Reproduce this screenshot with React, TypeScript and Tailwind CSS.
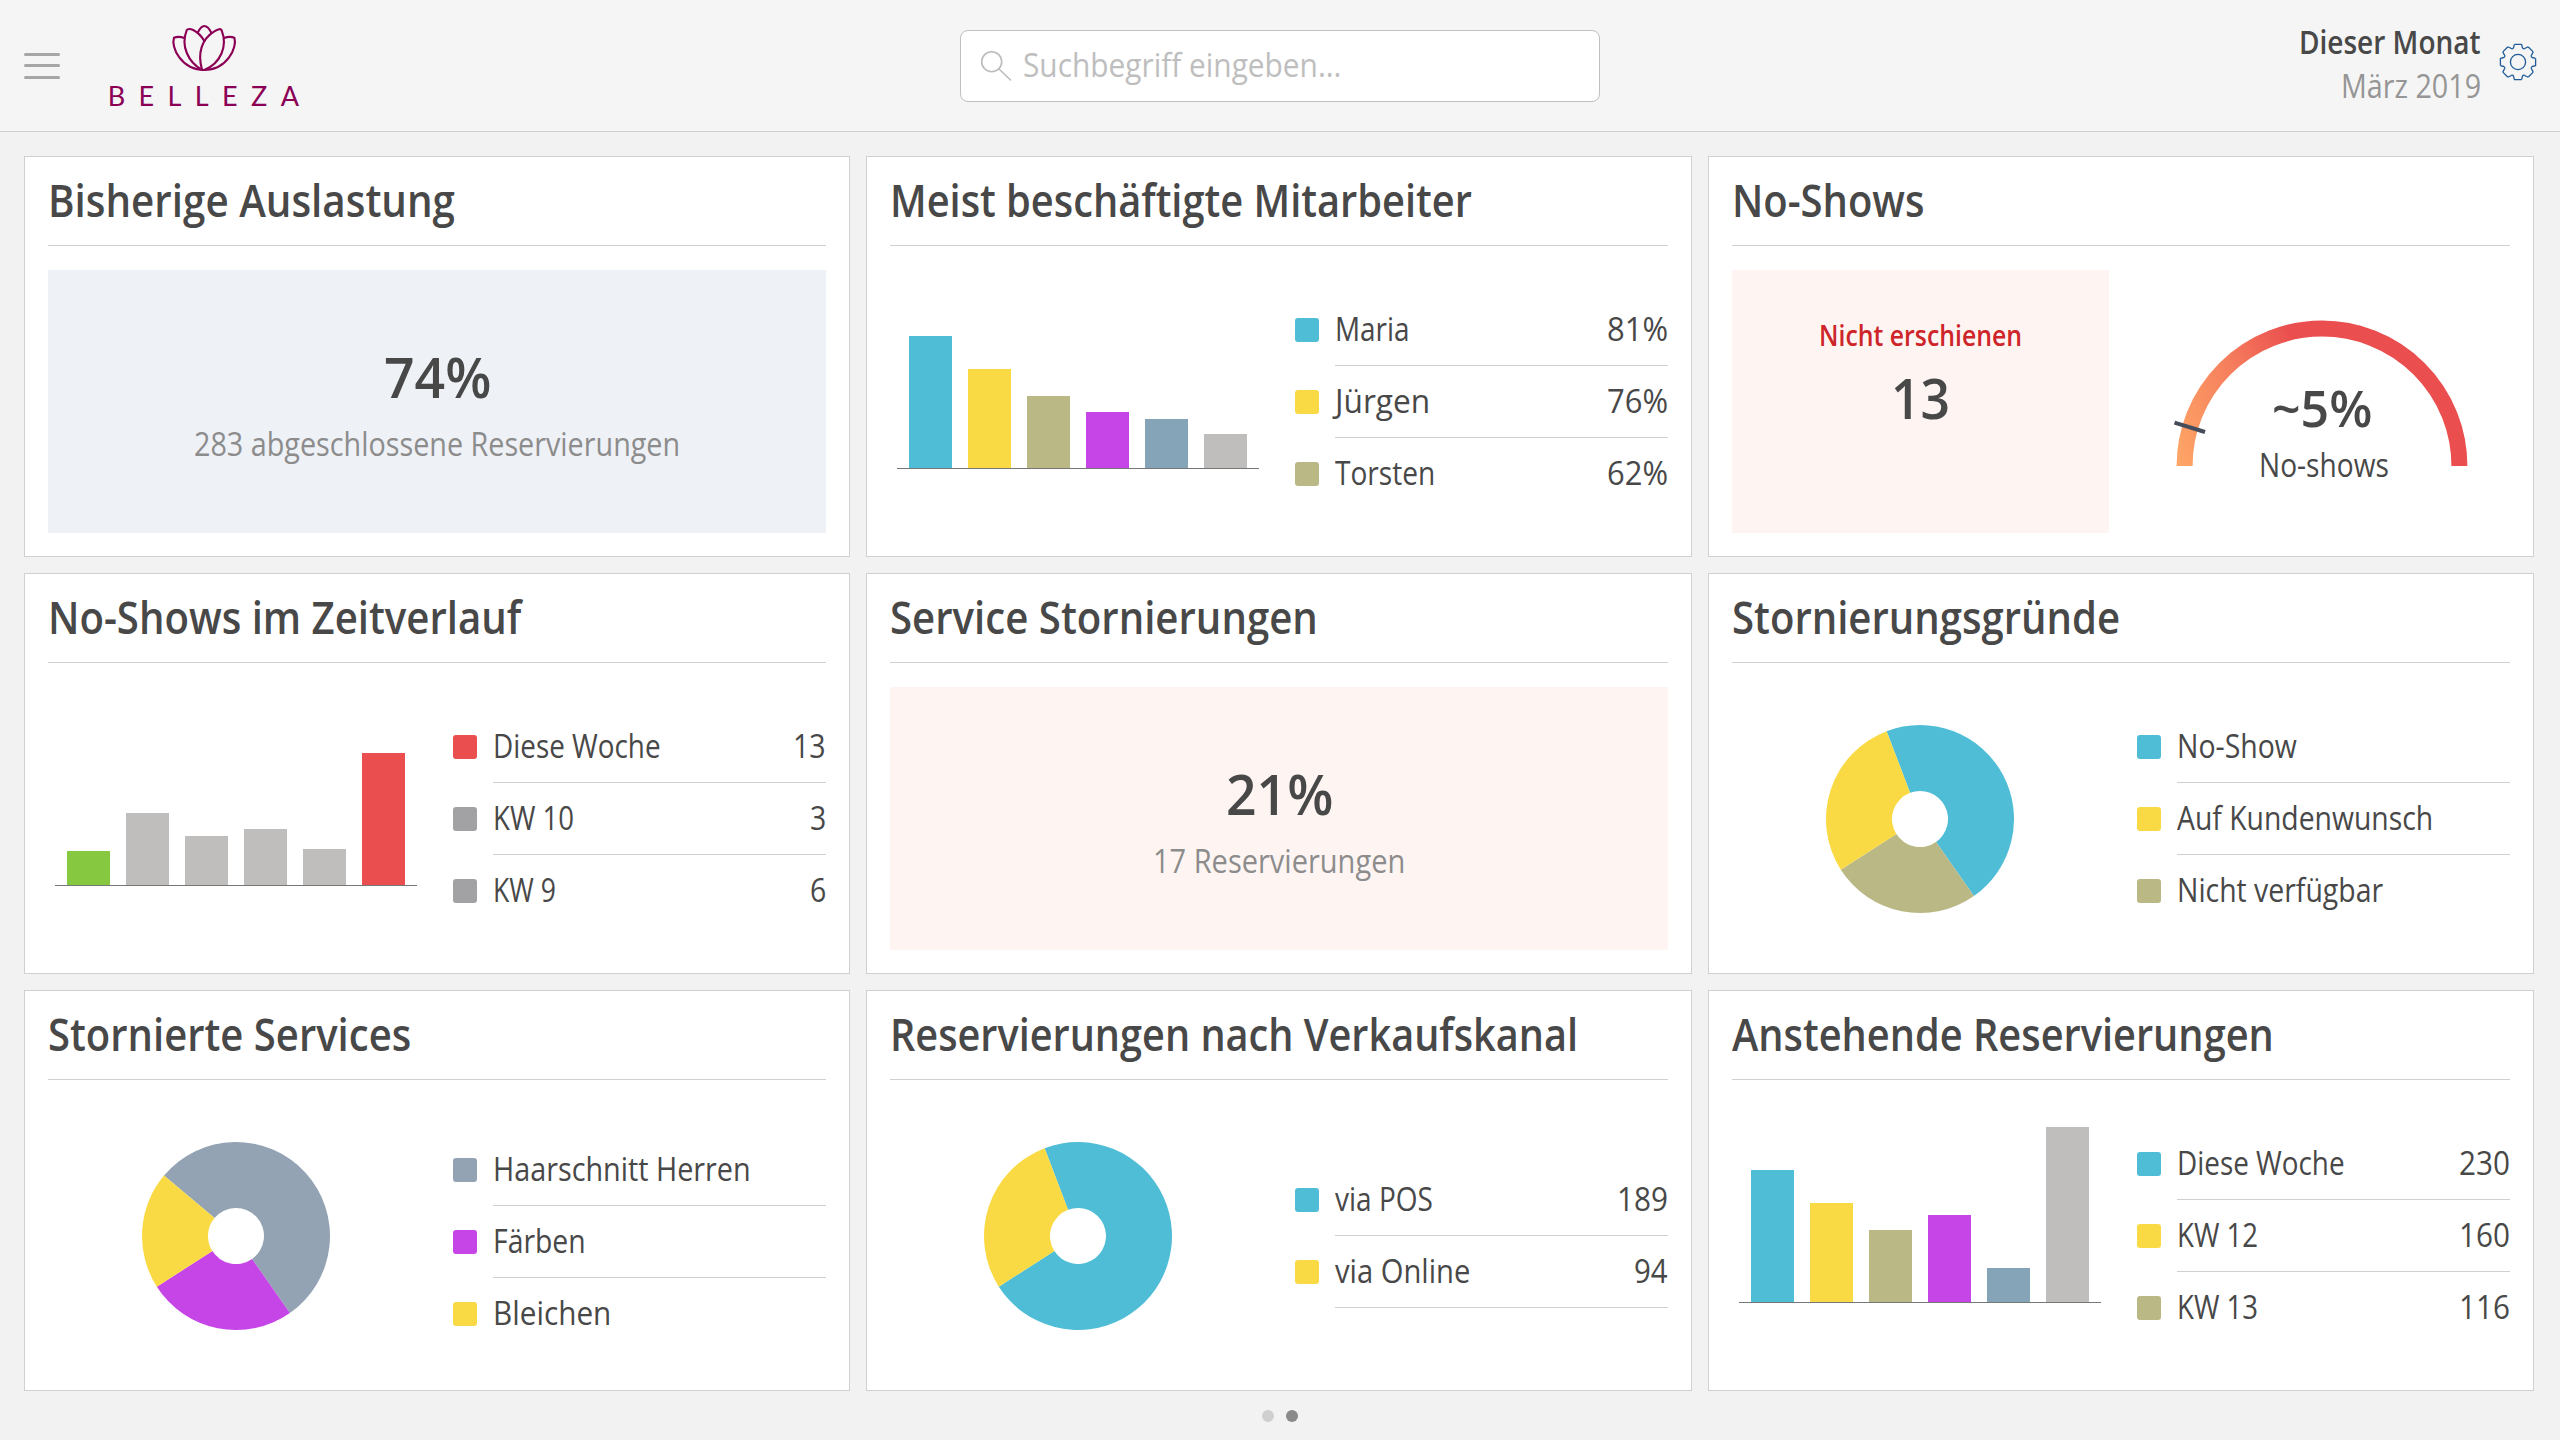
import { useLayoutEffect, useRef, useState } from 'react';
import type { ReactNode } from 'react';

const TEAL = '#50bdd6';
const YELLOW = '#f9da45';
const OLIVE = '#bab884';
const PURPLE = '#c645e6';
const STEEL = '#86a4b8';
const SILVER = '#bfbebd';
const RED = '#ea4e4e';
const GREEN = '#86c840';
const GRAY = '#a2a1a3';
const SLATE = '#94a3b4';

type LegendItem = { color: string; label: string; width: string; value?: string; valueWidth?: string };
type BarDatum = { color: string; height: number };
type SliceDatum = { color: string; from: number; to: number };

/** A single line of text, condensed horizontally to fill the width its class gives it. */
function Condensed({ className, children }: { className: string; children: ReactNode }) {
  const box = useRef<HTMLSpanElement>(null);
  const line = useRef<HTMLSpanElement>(null);
  const [scale, setScale] = useState(1);

  useLayoutEffect(() => {
    if (box.current && line.current) {
      setScale(box.current.clientWidth / line.current.offsetWidth);
    }
  }, [children]);

  return (
    <span ref={box} className={`block text-left whitespace-nowrap ${className}`}>
      <span ref={line} className="inline-block origin-left" style={{ transform: `scaleX(${scale})` }}>
        {children}
      </span>
    </span>
  );
}

function Card({ title, width, children }: { title: string; width: string; children: ReactNode }) {
  return (
    <section className="flex h-[401px] flex-col border border-[#d0d0d0] bg-white px-[23px]">
      <h2 className="flex h-[89px] items-center border-b border-[#d0d0d0] pb-1 text-[46px] leading-none font-semibold">
        <Condensed className={width}>{title}</Condensed>
      </h2>
      <div className="mt-6 grid h-[263px] auto-cols-fr grid-flow-col gap-6">{children}</div>
    </section>
  );
}

function Panel({ className, value, caption, width }: { className: string; value: string; caption: string; width: string }) {
  return (
    <div className={`flex flex-col items-center pt-[70px] ${className}`}>
      <strong className="text-[56px] leading-[72px] font-semibold">
        <Condensed className="w-[107px]">{value}</Condensed>
      </strong>
      <span className="mt-3 text-[32px] leading-[40px] text-[#8c8c8c]">
        <Condensed className={width}>{caption}</Condensed>
      </span>
    </div>
  );
}

function Legend({ items, shifted, closed }: { items: LegendItem[]; shifted?: boolean; closed?: boolean }) {
  return (
    <ul className={`flex flex-col justify-center pl-1 text-[32px] ${shifted ? 'pt-3' : ''}`}>
      {items.map((item, i) => (
        <li key={item.label} className="flex h-[72px] items-center gap-4">
          <span className="size-6 rounded-[3px]" style={{ backgroundColor: item.color }} />
          <span
            className={`flex h-full flex-1 items-center justify-between border-b leading-none ${
              i < items.length - 1 || closed ? 'border-[#d0d0d0]' : 'border-transparent'
            }`}
          >
            <Condensed className={item.width}>{item.label}</Condensed>
            {item.value && <Condensed className={item.valueWidth ?? 'w-[51px]'}>{item.value}</Condensed>}
          </span>
        </li>
      ))}
    </ul>
  );
}

function BarChart({ bars }: { bars: BarDatum[] }) {
  return (
    <div className="flex items-end pb-16 pl-[7px]">
      <div className="flex items-end gap-4 border-b border-[#777777] px-3">
        {bars.map((bar, i) => (
          <div key={i} className="w-[43px]" style={{ height: bar.height, backgroundColor: bar.color }} />
        ))}
      </div>
    </div>
  );
}

function point(angle: number, radius: number) {
  const rad = (angle * Math.PI) / 180;
  return `${(Math.sin(rad) * radius).toFixed(2)} ${(-Math.cos(rad) * radius).toFixed(2)}`;
}

function Donut({ slices }: { slices: SliceDatum[] }) {
  return (
    <div className="flex items-center pl-[94px]">
      <svg className="size-[188px]" viewBox="-94 -94 188 188">
        {slices.map(({ color, from, to }) => {
          const large = to - from > 180 ? 1 : 0;
          return (
            <path
              key={color}
              fill={color}
              d={`M${point(from, 94)} A94 94 0 ${large} 1 ${point(to, 94)} L${point(to, 28)} A28 28 0 ${large} 0 ${point(from, 28)} Z`}
            />
          );
        })}
      </svg>
    </div>
  );
}

function Gauge() {
  return (
    <div className="relative flex flex-col items-center pt-[50px]">
      <svg className="h-[150px] w-[298px]" viewBox="-149 -146 298 150">
        <defs>
          <linearGradient id="gauge" gradientUnits="userSpaceOnUse" x1="-146" y1="0" x2="0" y2="-60">
            <stop offset="0" stopColor="#ffa766" />
            <stop offset="0.55" stopColor="#f67f5e" />
            <stop offset="1" stopColor="#ea4e4e" />
          </linearGradient>
        </defs>
        <path d="M-137.4 0 A137.4 137.4 0 0 1 137.4 0" fill="none" stroke="url(#gauge)" strokeWidth="16" />
        <path d="M-147.5 -43.3 L-117 -34" stroke="#454d5b" strokeWidth="4" />
      </svg>
      <div className="absolute top-[107px] flex flex-col items-center">
        <strong className="text-[51px] leading-[60px] font-semibold">
          <Condensed className="w-[100px]">~5%</Condensed>
        </strong>
        <span className="mt-2 pl-1 text-[32px] leading-[40px]">
          <Condensed className="w-[130px]">No-shows</Condensed>
        </span>
      </div>
    </div>
  );
}

function Logo() {
  return (
    <div className="ml-[47px] flex w-[194px] flex-col items-center text-[#8b0055]">
      <svg
        className="h-[50px] w-[68px]"
        viewBox="509 70 204 150"
        fill="none"
        stroke="currentColor"
        strokeWidth="6.4"
        strokeLinejoin="round"
        strokeLinecap="round"
      >
        <path d="M552 115 C541 111 529 111 521 114 C511 143 543 211 612 211" />
        <path d="M671 115 C682 111 694 111 702 114 C712 143 680 211 612 211" />
        <path d="M604 210 C565 188 540 140 559 92 C564 82 592 91 612 124" />
        <path d="M605 210 C591 160 604 118 642 95 C653 88 661 86 664 92 C683 140 660 192 612 211" />
        <path d="M592 99 C598 87 606 79 612 79 C618 79 627 87 633 99" />
      </svg>
      <span className="mt-[6px] -mr-[12px] font-[Lato,sans-serif] text-[27px] leading-[34px] tracking-[13.4px]">BELLEZA</span>
    </div>
  );
}

function Gear() {
  return (
    <svg className="size-[38px]" viewBox="-19 -19 38 38" fill="none" stroke="#1f5b99" strokeWidth="1.3" strokeLinejoin="round">
      <circle r="7.6" />
      {[0, 90, 180, 270].map((angle) => (
        <path
          key={angle}
          transform={`rotate(${angle})`}
          d="M-3.6 -17.6 H3.6 L4.5 -14.2 Q4.9 -13 6.2 -13.2 L9.6 -15 L10.6 -14.7 L14.7 -10.6 L15 -9.6 L13.2 -6.2 Q13 -4.9 14.2 -4.5 L17.6 -3.6"
        />
      ))}
    </svg>
  );
}

function Header() {
  return (
    <header className="flex h-[132px] items-start justify-between border-b border-[#cfcfcf] bg-[#f5f5f5] pr-[23px] pl-6">
      <div className="flex w-[936px] items-start">
        <div className="mt-[53px] flex w-9 flex-col gap-[8.3px]">
          <span className="h-[3px] rounded-full bg-[#a6a6a6]" />
          <span className="h-[3px] rounded-full bg-[#a6a6a6]" />
          <span className="h-[3px] rounded-full bg-[#a6a6a6]" />
        </div>
        <div className="pt-[23px]">
          <Logo />
        </div>
      </div>
      <div className="mt-[30px] flex h-[72px] w-[640px] items-center rounded-lg border border-[#c0c0c0] bg-white pl-[18px]">
        <svg className="size-[34px]" viewBox="0 0 34 34" fill="none" stroke="#bcbcbc" strokeWidth="1.6" strokeLinecap="round">
          <circle cx="12.7" cy="12.7" r="10" />
          <path d="M20 20 L31.5 31" />
        </svg>
        <span className="ml-[10px] pb-0.5 text-[32px] leading-none text-[#bebebe]">
          <Condensed className="w-[318px]">Suchbegriff eingeben...</Condensed>
        </span>
      </div>
      <div className="flex w-[937px] items-start justify-end gap-[18px]">
        <div className="mt-5 flex flex-col items-end text-[32px] leading-[44px]">
          <span className="font-semibold">
            <Condensed className="w-[182px]">Dieser Monat</Condensed>
          </span>
          <span className="text-[#969696]">
            <Condensed className="w-[140px]">März 2019</Condensed>
          </span>
        </div>
        <div className="mt-[43px]">
          <Gear />
        </div>
      </div>
    </header>
  );
}

export default function App() {
  return (
    <div className="flex h-[1440px] w-[2560px] flex-col overflow-hidden bg-[#f2f2f2] font-['Open_Sans',sans-serif] text-[#484848]">
      <Header />
      <main className="mt-6 ml-6 grid grid-cols-[repeat(3,826px)] gap-4">
        <Card title="Bisherige Auslastung" width="w-[407px]">
          <Panel className="bg-[#eef1f6]" value="74%" caption="283 abgeschlossene Reservierungen" width="w-[486px]" />
        </Card>

        <Card title="Meist beschäftigte Mitarbeiter" width="w-[582px]">
          <BarChart
            bars={[
              { color: TEAL, height: 132 },
              { color: YELLOW, height: 99 },
              { color: OLIVE, height: 72 },
              { color: PURPLE, height: 56 },
              { color: STEEL, height: 49 },
              { color: SILVER, height: 34 },
            ]}
          />
          <Legend
            items={[
              { color: TEAL, label: 'Maria', width: 'w-[75px]', value: '81%', valueWidth: 'w-[61px]' },
              { color: YELLOW, label: 'Jürgen', width: 'w-[95px]', value: '76%', valueWidth: 'w-[61px]' },
              { color: OLIVE, label: 'Torsten', width: 'w-[100px]', value: '62%', valueWidth: 'w-[61px]' },
            ]}
          />
        </Card>

        <Card title="No-Shows" width="w-[192px]">
          <div className="flex flex-col items-center bg-[#fef5f3] pt-[45px]">
            <span className="text-[29px] leading-[40px] font-semibold text-[#cd2529]">
              <Condensed className="w-[203px]">Nicht erschienen</Condensed>
            </span>
            <strong className="mt-2 text-[56px] leading-[68px] font-semibold">
              <Condensed className="w-[59px]">13</Condensed>
            </strong>
          </div>
          <Gauge />
        </Card>

        <Card title="No-Shows im Zeitverlauf" width="w-[473px]">
          <BarChart
            bars={[
              { color: GREEN, height: 34 },
              { color: SILVER, height: 72 },
              { color: SILVER, height: 49 },
              { color: SILVER, height: 56 },
              { color: SILVER, height: 36 },
              { color: RED, height: 132 },
            ]}
          />
          <Legend
            items={[
              { color: RED, label: 'Diese Woche', width: 'w-[168px]', value: '13', valueWidth: 'w-[33px]' },
              { color: GRAY, label: 'KW 10', width: 'w-[81px]', value: '3', valueWidth: 'w-4' },
              { color: GRAY, label: 'KW 9', width: 'w-[63px]', value: '6', valueWidth: 'w-4' },
            ]}
          />
        </Card>

        <Card title="Service Stornierungen" width="w-[428px]">
          <Panel className="bg-[#fef5f3]" value="21%" caption="17 Reservierungen" width="w-[252px]" />
        </Card>

        <Card title="Stornierungsgründe" width="w-[388px]">
          <Donut
            slices={[
              { color: TEAL, from: -20.8, to: 145 },
              { color: OLIVE, from: 145, to: 237.4 },
              { color: YELLOW, from: 237.4, to: 339.2 },
            ]}
          />
          <Legend
            items={[
              { color: TEAL, label: 'No-Show', width: 'w-[120px]' },
              { color: YELLOW, label: 'Auf Kundenwunsch', width: 'w-[256px]' },
              { color: OLIVE, label: 'Nicht verfügbar', width: 'w-[206px]' },
            ]}
          />
        </Card>

        <Card title="Stornierte Services" width="w-[363px]">
          <Donut
            slices={[
              { color: SLATE, from: -50, to: 145 },
              { color: PURPLE, from: 145, to: 237.4 },
              { color: YELLOW, from: 237.4, to: 310 },
            ]}
          />
          <Legend
            shifted
            items={[
              { color: SLATE, label: 'Haarschnitt Herren', width: 'w-[258px]' },
              { color: PURPLE, label: 'Färben', width: 'w-[93px]' },
              { color: YELLOW, label: 'Bleichen', width: 'w-[118px]' },
            ]}
          />
        </Card>

        <Card title="Reservierungen nach Verkaufskanal" width="w-[688px]">
          <Donut
            slices={[
              { color: TEAL, from: -20.8, to: 237.4 },
              { color: YELLOW, from: 237.4, to: 339.2 },
            ]}
          />
          <Legend
            closed
            items={[
              { color: TEAL, label: 'via POS', width: 'w-[98px]', value: '189' },
              { color: YELLOW, label: 'via Online', width: 'w-[135px]', value: '94', valueWidth: 'w-[34px]' },
            ]}
          />
        </Card>

        <Card title="Anstehende Reservierungen" width="w-[542px]">
          <BarChart
            bars={[
              { color: TEAL, height: 132 },
              { color: YELLOW, height: 99 },
              { color: OLIVE, height: 72 },
              { color: PURPLE, height: 87 },
              { color: STEEL, height: 34 },
              { color: SILVER, height: 175 },
            ]}
          />
          <Legend
            items={[
              { color: TEAL, label: 'Diese Woche', width: 'w-[168px]', value: '230' },
              { color: YELLOW, label: 'KW 12', width: 'w-[81px]', value: '160' },
              { color: OLIVE, label: 'KW 13', width: 'w-[81px]', value: '116' },
            ]}
          />
        </Card>
      </main>
      <nav className="mt-[19px] flex justify-center gap-3">
        <span className="size-3 rounded-full bg-[#cfcfcf]" />
        <span className="size-3 rounded-full bg-[#8a8a8a]" />
      </nav>
    </div>
  );
}
